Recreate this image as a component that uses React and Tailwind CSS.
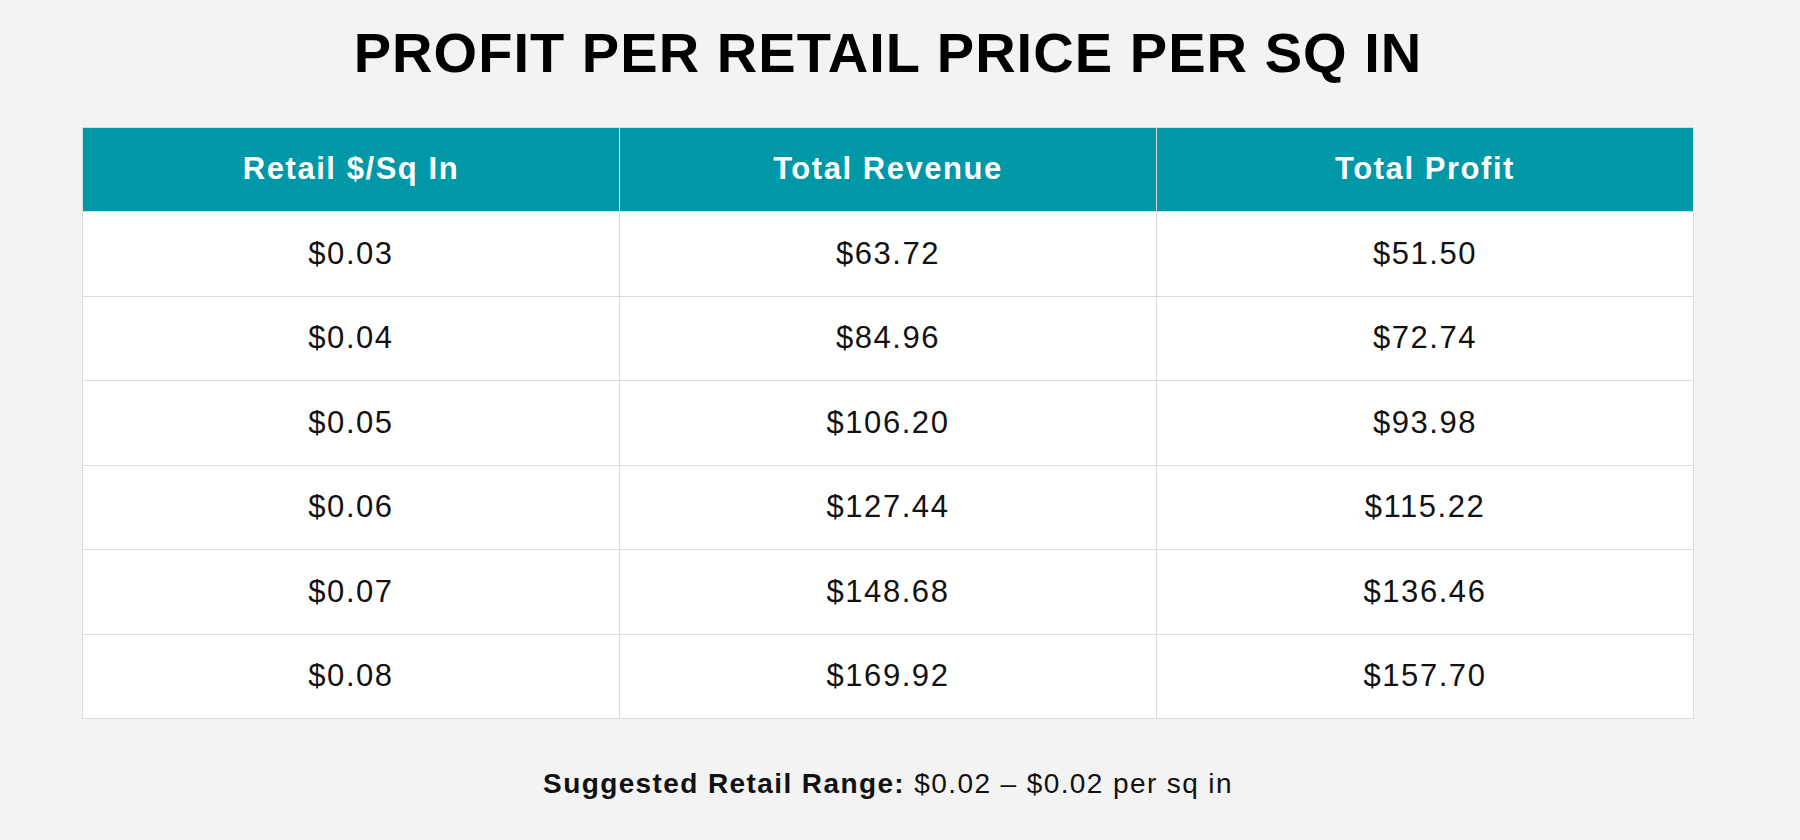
import React from "react";

const rows = [
  ["$0.03", "$63.72", "$51.50"],
  ["$0.04", "$84.96", "$72.74"],
  ["$0.05", "$106.20", "$93.98"],
  ["$0.06", "$127.44", "$115.22"],
  ["$0.07", "$148.68", "$136.46"],
  ["$0.08", "$169.92", "$157.70"],
];

const headers = ["Retail $/Sq In", "Total Revenue", "Total Profit"];

export default function App() {
  return (
    <div
      className="w-full h-[840px] bg-[#f3f3f3] text-[#111] overflow-hidden"
      style={{ fontFamily: '"Liberation Sans", Arial, sans-serif' }}
    >
      <div className="ml-[82px] w-[1612px] flex flex-col">
        <h1 className="pt-[25px] text-center text-[56px] leading-[56px] font-bold tracking-[1.05px] text-black">
          PROFIT PER RETAIL PRICE PER SQ IN
        </h1>
        <div className="mt-[46px] border-t border-l border-[#dcdcdc] bg-white">
          <div className="grid grid-cols-3 h-[84px] bg-[#0097a7]">
            {headers.map((h) => (
              <div
                key={h}
                className="flex items-center justify-center border-r border-b border-[#dcdcdc] text-white font-bold text-[31px] tracking-[0.05em]"
              >
                {h}
              </div>
            ))}
          </div>
          {rows.map((r, i) => (
            <div key={i} className="grid grid-cols-3 h-[84.5px]">
              {r.map((c, j) => (
                <div
                  key={j}
                  className="flex items-center justify-center border-r border-b border-[#dcdcdc] text-[31px] tracking-[0.05em]"
                >
                  {c}
                </div>
              ))}
            </div>
          ))}
        </div>
        <p className="mt-[49px] text-center text-[28px] leading-[32px] tracking-[0.05em]">
          <span className="font-bold">Suggested Retail Range:</span> $0.02 – $0.02 per sq in
        </p>
      </div>
    </div>
  );
}
